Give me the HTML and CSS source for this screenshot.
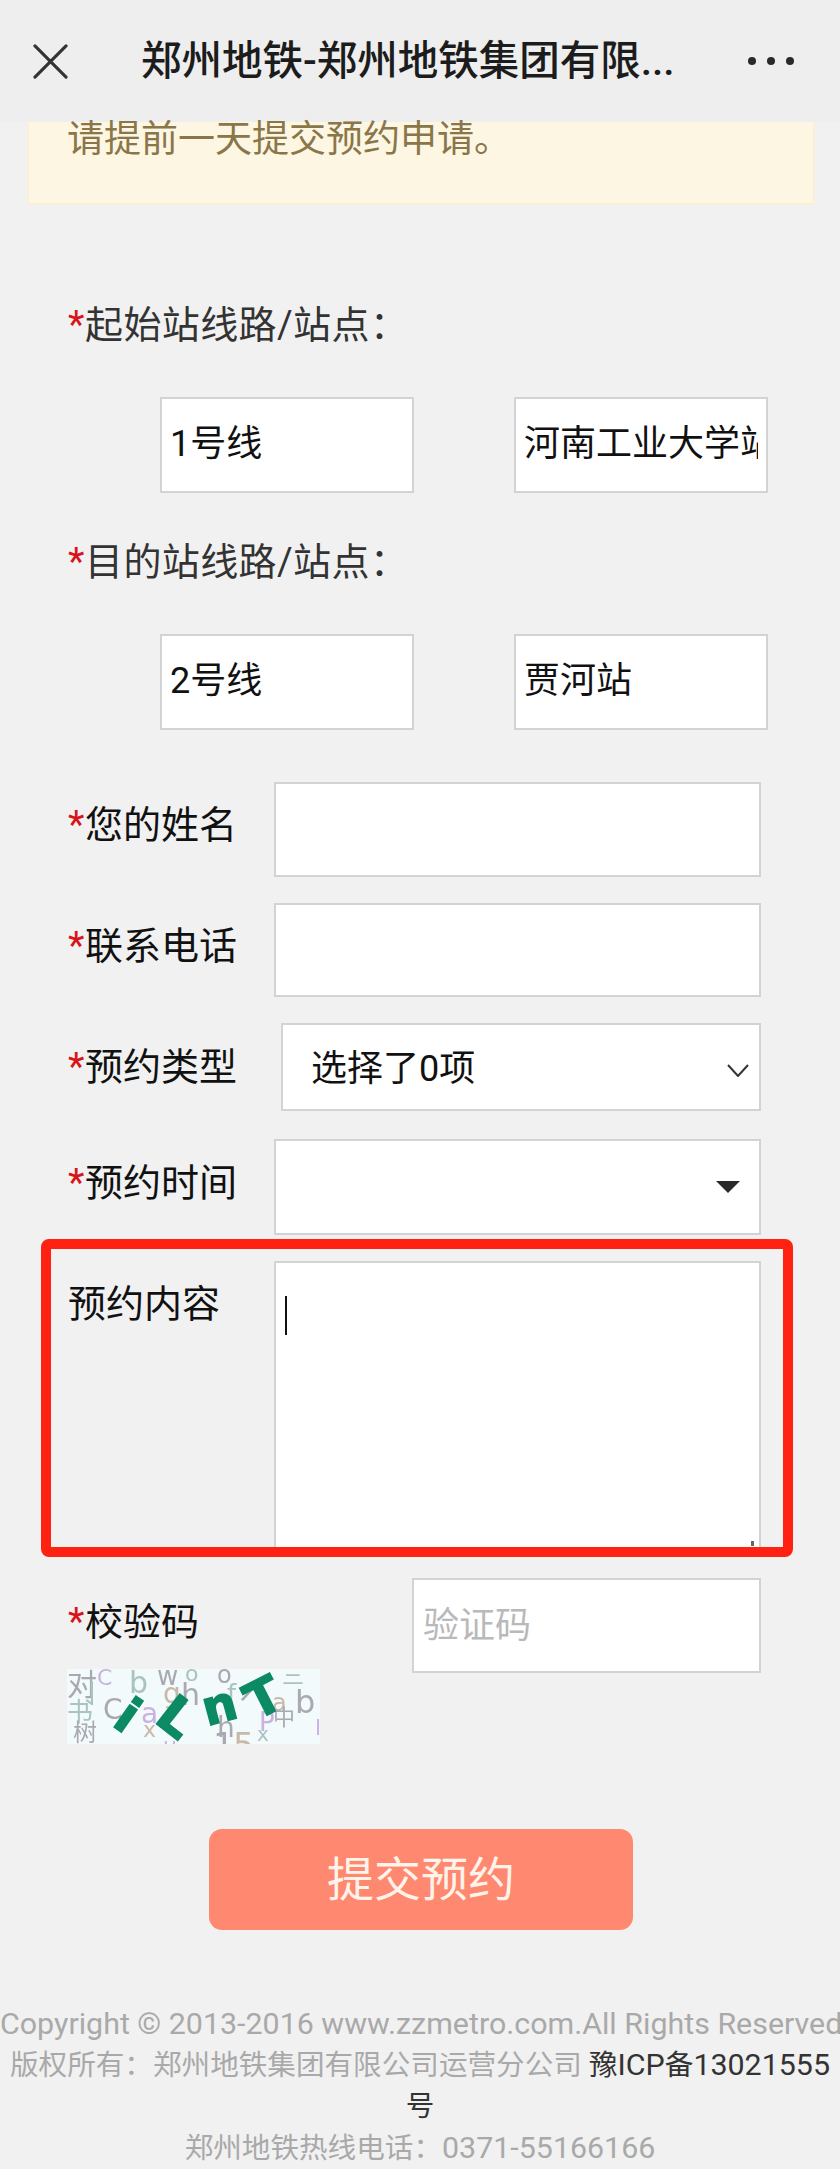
FILE: index.html
```html
<!DOCTYPE html>
<html lang="zh-CN">
<head>
<meta charset="utf-8">
<title>郑州地铁</title>
<link rel="stylesheet" href="styles.css">
</head>
<body>
<header class="topbar">
  <svg class="close-icon" viewBox="0 0 36 36" width="35" height="35"><path class="icon-line" d="M2 2 L34 34 M34 2 L2 34"/></svg>
  <div class="title">郑州地铁-郑州地铁集团有限...</div>
  <div class="more"><i></i><i></i><i></i></div>
</header>
<div class="notice">请提前一天提交预约申请。</div>
<main class="form">
  <div class="group-label first"><span class="star">*</span><span class="soft">起始站线路/站点：</span></div>
  <div class="pair">
    <div class="field station"><span class="value">1号线</span></div>
    <div class="field station"><span class="value">河南工业大学站</span></div>
  </div>
  <div class="group-label"><span class="star">*</span><span class="soft">目的站线路/站点：</span></div>
  <div class="pair">
    <div class="field station"><span class="value">2号线</span></div>
    <div class="field station"><span class="value">贾河站</span></div>
  </div>

  <div class="row row-name">
    <div class="label"><span class="star">*</span>您的姓名</div>
    <div class="field wide"></div>
  </div>
  <div class="row row-phone">
    <div class="label"><span class="star">*</span>联系电话</div>
    <div class="field wide"></div>
  </div>
  <div class="row row-type">
    <div class="label"><span class="star">*</span>预约类型</div>
    <div class="field select">
      <span class="select-text">选择了0项</span>
      <svg class="chevron" viewBox="0 0 22 13" width="22" height="13"><path class="icon-thin" d="M1 1 L11 12 L21 1"/></svg>
    </div>
  </div>
  <div class="row row-date">
    <div class="label"><span class="star">*</span>预约时间</div>
    <div class="field wide date"><span class="caret-down"></span></div>
  </div>
  <div class="row row-content">
    <div class="label plain">预约内容</div>
    <div class="field wide area"><span class="cursor"></span><span class="grip"></span></div>
    <div class="highlight"></div>
  </div>
  <div class="row row-captcha">
    <div class="captcha-col">
      <div class="captcha-label"><span class="star">*</span>校验码</div>
      <svg class="captcha" viewBox="0 0 253 75" width="253" height="75">
        <rect class="c-bg" width="253" height="75"/>
        <text class="n1" x="0" y="26" font-size="30">对</text>
        <text class="n2" x="12" y="34" font-size="26">丨</text>
        <text class="n2" x="0" y="52" font-size="26">书</text>
        <text class="n1" x="6" y="72" font-size="24">树</text>
        <text class="n3" x="30" y="16" font-size="22">C</text>
        <text class="n1" x="36" y="50" font-size="28">C</text>
        <text class="n2" x="62" y="24" font-size="30">b</text>
        <text class="n1" x="90" y="16" font-size="26">w</text>
        <text class="n4" x="96" y="34" font-size="28">g</text>
        <text class="n1" x="114" y="36" font-size="30">h</text>
        <text class="n2" x="118" y="12" font-size="22">o</text>
        <text class="n1" x="150" y="14" font-size="24">o</text>
        <text class="n2" x="160" y="34" font-size="26">f</text>
        <text class="n1" x="175" y="28" font-size="32" transform="rotate(25 175 28)">/</text>
        <text class="n3" x="74" y="54" font-size="28">a</text>
        <text class="n4" x="76" y="68" font-size="22">x</text>
        <text class="n1" x="150" y="68" font-size="28">h</text>
        <text class="n1" x="146" y="88" font-size="34">1</text>
        <text class="n4" x="166" y="88" font-size="34">5</text>
        <text class="n3" x="96" y="84" font-size="22">u</text>
        <text class="n4" x="205" y="42" font-size="24">a</text>
        <text class="n3" x="192" y="62" font-size="26">P</text>
        <text class="n2" x="190" y="72" font-size="20">x</text>
        <text class="n1" x="206" y="56" font-size="22">中</text>
        <text class="n1" x="228" y="44" font-size="32">b</text>
        <text class="n2" x="215" y="14" font-size="22">三</text>
        <text class="n3" x="248" y="66" font-size="22">l</text>
        <text class="letter" x="61" y="46" font-size="50" transform="rotate(35 61 46)" text-anchor="middle" dy="18">i</text>
        <text class="letter" x="110" y="48" font-size="52" transform="rotate(38 110 48)" text-anchor="middle" dy="18">L</text>
        <text class="letter" x="153" y="39" font-size="48" transform="rotate(-15 153 39)" text-anchor="middle" dy="14">n</text>
        <text class="letter" x="196" y="28" font-size="50" transform="rotate(-27 196 28)" text-anchor="middle" dy="18">T</text>
      </svg>
    </div>
    <div class="field code"><span class="placeholder">验证码</span></div>
  </div>
  <div class="submit"><span class="submit-text">提交预约</span></div>
</main>
<footer class="footer">
  <p class="copy">Copyright © 2013-2016 www.zzmetro.com.All Rights Reserved</p>
  <p>版权所有：郑州地铁集团有限公司运营分公司 <a class="icp">豫<span class="latin">ICP</span>备<span class="latin">13021555</span>号</a></p>
  <p>郑州地铁热线电话：<span class="latin">0371-55166166</span></p>
</footer>
</body>
</html>
```
FILE: styles.css
```css
* { box-sizing: border-box; }
html, body { margin: 0; padding: 0; }
body {
  width: 840px;
  height: 2169px;
  overflow: hidden;
  background: #f1f1f1;
  color: #111;
  font-family: Roboto, "Noto Sans CJK SC", sans-serif;
  font-size: 38px;
}
.topbar {
  height: 122px;
  background: #eeeeee;
  display: flex;
  align-items: center;
  padding: 0 0 0 33px;
}
.close-icon { flex: none; margin-top: 1px; }
.icon-line { fill: none; stroke: #333; stroke-width: 3.2; stroke-linecap: round; }
.title {
  margin-left: 73px;
  width: 570px;
  flex: none;
  font-size: 40.5px;
  font-weight: 500;
  color: #1c1c1c;
  line-height: 50px;
  white-space: nowrap;
}
.more { display: flex; gap: 11px; margin-left: 37px; }
.more i { width: 8px; height: 8px; border-radius: 50%; background: #2a2a2a; }
.notice {
  height: 83px;
  margin: 0 25px 0 27px;
  padding-left: 38px;
  background: #fdf6e3;
  border: solid #f9f0d9;
  border-width: 0 2px 2px;
  border-radius: 0 0 3px 3px;
  color: #8a7649;
  font-size: 37px;
  line-height: 36px;
}
.star { display: inline-block; width: 17px; color: #d8141a; }
.soft { color: #333; letter-spacing: .4px; }
.group-label {
  height: 46px;
  line-height: 46px;
  margin-top: 46px;
  padding-left: 68px;
}
.group-label.first { margin-top: 97px; }
.pair {
  display: flex;
  gap: 100px;
  margin-top: 49px;
  padding-left: 160px;
}
.field {
  background: #fff;
  border: 2px solid #d3d3d3;
  display: flex;
  align-items: center;
}
.station { width: 254px; height: 96px; padding: 0 8px 11px; font-size: 36px; }
.value { display: block; width: 100%; overflow: hidden; white-space: nowrap; color: #111; }
.row {
  display: flex;
  align-items: center;
  padding-left: 68px;
  position: relative;
}
.label { width: 206px; flex: none; line-height: 46px; margin-bottom: 9px; }
.wide { width: 487px; }
.row-name { margin-top: 52px; height: 95px; }
.row-name .wide, .row-phone .wide { height: 100%; }
.row-phone { margin-top: 26px; height: 94px; }
.row-type { margin-top: 26px; height: 88px; }
.row-type .label { width: 213px; margin-bottom: 0; }
.select { width: 480px; height: 100%; padding: 0 10px 0 28px; justify-content: space-between; font-size: 36px; }
.select-text { margin-bottom: 5px; }
.chevron { margin-top: 6px; }
.icon-thin { fill: none; stroke: #333; stroke-width: 2; }
.row-date { margin-top: 28px; height: 96px; }
.row-date .wide { height: 100%; justify-content: flex-end; padding-right: 19px; }
.caret-down {
  width: 0; height: 0;
  border-left: 12px solid transparent;
  border-right: 12px solid transparent;
  border-top: 12px solid #2a2a2a;
}
.row-content { margin-top: 26px; height: 291px; align-items: flex-start; }
.label.plain { margin: 20px 0 0; }
.area { height: 100%; align-items: flex-start; padding: 33px 0 0 9px; position: relative; }
.cursor { display: block; width: 2px; height: 39px; background: #111; }
.grip { position: absolute; right: 5px; bottom: 4px; width: 3px; height: 5px; background: #666; }
.highlight {
  position: absolute;
  left: 41px;
  top: -22px;
  width: 752px;
  height: 318px;
  border: 10px solid #ff2112;
  border-radius: 8px;
  pointer-events: none;
}
.row-captcha { margin-top: 26px; align-items: flex-start; padding-left: 67px; }
.captcha-col { width: 345px; flex: none; padding-top: 21px; }
.captcha-label { height: 46px; line-height: 46px; padding-left: 1px; }
.captcha { display: block; margin-top: 24px; filter: blur(.7px); }
.code { width: 349px; height: 95px; padding: 0 9px 8px; font-size: 36px; }
.placeholder { color: #b9b9b9; }
.c-bg { fill: #f3fafb; }
.captcha text { font-family: "DejaVu Sans", "Noto Sans CJK SC", sans-serif; }
.captcha .n1 { fill: #aaa9b2; }
.captcha .n2 { fill: #a9c4bf; }
.captcha .n3 { fill: #c9b1e2; }
.captcha .n4 { fill: #c9b8a9; }
.captcha .letter { fill: #0b8a63; stroke: #0b8a63; stroke-width: 1.5; font-weight: 700; }
.submit {
  width: 424px;
  height: 101px;
  margin: 85px 0 0 209px;
  border-radius: 13px;
  background: #ff8870;
  color: #fff3ea;
  font-size: 47px;
  display: flex;
  align-items: center;
  justify-content: center;
}
.submit-text { margin-bottom: 8px; }
.footer {
  margin-top: 73px;
  text-align: center;
  color: #a9a9a9;
  font-size: 28.6px;
  line-height: 41px;
}
.footer p { margin: 0; }
.copy { white-space: nowrap; font-size: 30.4px; }
.latin { font-size: 30.4px; }
.icp { color: #333; }
```
